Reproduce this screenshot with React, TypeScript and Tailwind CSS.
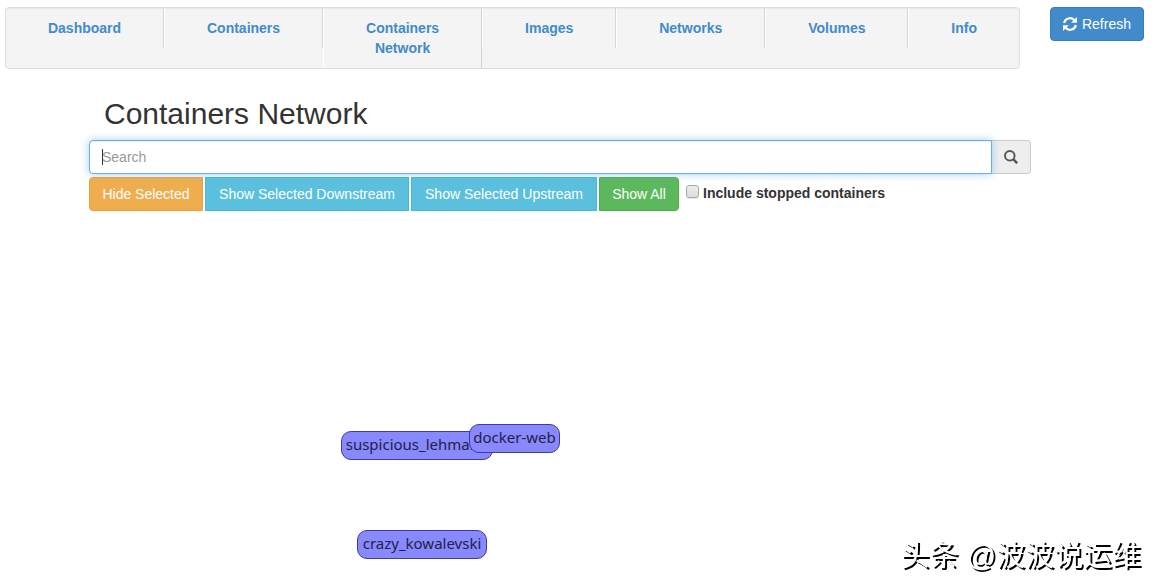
import React from 'react';

const navItems = [
  { label: 'Dashboard' },
  { label: 'Containers' },
  { label: 'Containers Network', active: true },
  { label: 'Images' },
  { label: 'Networks' },
  { label: 'Volumes' },
  { label: 'Info' },
];

const nodes = [
  { name: 'suspicious_lehmann', x: 252, y: 220, width: 152 },
  { name: 'docker-web', x: 380, y: 213, width: 91 },
  { name: 'crazy_kowalevski', x: 268, y: 319, width: 130 },
];

const RefreshIcon: React.FC = () => (
  <svg className="w-[14px] h-[14px]" viewBox="0 0 14 14" fill="none" aria-hidden="true">
    <path d="M1.2 6A5.8 5.4 0 0 1 11.4 3.2" stroke="currentColor" strokeWidth="2.2" />
    <path d="M14 0V5.8H8.2Z" fill="currentColor" />
    <path d="M12.8 8A5.8 5.4 0 0 1 2.6 10.8" stroke="currentColor" strokeWidth="2.2" />
    <path d="M0 14V8.2H5.8Z" fill="currentColor" />
  </svg>
);

const SearchIcon: React.FC = () => (
  <svg className="w-[14px] h-[14px]" viewBox="0 0 14 14" fill="none" stroke="currentColor" aria-hidden="true">
    <circle cx="5.8" cy="5.8" r="4.8" strokeWidth="1.9" />
    <path d="M9.2 9.2L13.2 13.2" strokeWidth="2.5" />
  </svg>
);

const NavBar: React.FC = () => (
  <nav className="flex-1 bg-[#f4f4f4] border border-[#dfdfdf] rounded shadow-[inset_0_1px_1px_rgba(0,0,0,0.05)]">
    <ul className="flex">
      {navItems.map((item, i) => (
        <li key={item.label} className="flex-auto">
          <a
            href="#"
            className={`block py-[10px] text-center font-bold text-[#428bca] ${i > 0 ? 'border-l border-l-white' : ''} ${
              i < navItems.length - 1 ? 'border-r border-r-[#d5d5d5]' : ''
            }`}
          >
            {item.active ? (
              <>
                Containers
                <br />
                Network
              </>
            ) : (
              item.label
            )}
          </a>
        </li>
      ))}
    </ul>
  </nav>
);

const Toolbar: React.FC = () => (
  <div className="flex items-start mt-[3px] gap-[2px] text-white">
    <button className="w-[114px] h-[34px] rounded-l bg-[#f0ad4e] border border-[#eea236]">Hide Selected</button>
    <button className="w-[204px] h-[34px] bg-[#5bc0de] border border-[#46b8da]">Show Selected Downstream</button>
    <button className="w-[186px] h-[34px] bg-[#5bc0de] border border-[#46b8da]">Show Selected Upstream</button>
    <button className="w-[80px] h-[34px] rounded-r bg-[#5cb85c] border border-[#4cae4c]">Show All</button>
    <label className="flex items-start pl-[5px] pt-[6px] gap-1 font-bold text-[#333]">
      <input
        type="checkbox"
        className="appearance-none w-[13px] h-[13px] mt-[2px] rounded-[3px] border border-[#a8a8a8] bg-linear-to-b from-[#eeeeee] to-[#dcdcdc] shadow-[0_1px_1px_rgba(0,0,0,0.1)]"
      />
      Include stopped containers
    </label>
  </div>
);

const NetworkGraph: React.FC = () => (
  <div className="relative h-[360px] font-['Noto_Sans',sans-serif] text-[15px] text-[#222244]">
    {nodes.map((node) => (
      <div
        key={node.name}
        className="absolute flex justify-center h-[29px] leading-[25px] whitespace-nowrap rounded-[10px] bg-[#8888ff] border border-[#3c3ca0]"
        style={{ left: node.x, top: node.y, width: node.width }}
      >
        {node.name}
      </div>
    ))}
  </div>
);

const App: React.FC = () => {
  return (
    <div className="bg-white font-['Liberation_Sans',Arial,sans-serif] text-[14px] leading-5 text-[#333]">
      <header className="flex items-start gap-[30px] pt-[7px] pl-[5px] pr-[15px]">
        <NavBar />
        <button className="flex items-center gap-[5px] h-[34px] px-3 rounded bg-[#428bca] border border-[#357ebd] text-white">
          <RefreshIcon />
          Refresh
        </button>
      </header>

      <main className="pl-[89px] pr-[128px] pt-7">
        <h1 className="pl-[15px] mb-[10px] text-[30px] leading-[33px]">Containers Network</h1>

        <div className="relative flex">
          <input
            type="text"
            aria-label="Search"
            placeholder="Search"
            className="flex-1 h-[34px] px-3 z-10 rounded-l bg-white border border-[#66afe9] outline-none placeholder:text-[#999] shadow-[inset_0_1px_1px_rgba(0,0,0,0.075),0_0_8px_rgba(102,175,233,0.6)]"
          />
          <span className="absolute z-20 left-[13px] top-[9px] w-px h-4 bg-[#333]" />
          <button
            aria-label="Search containers"
            className="flex items-center justify-center w-[39px] h-[34px] rounded-r bg-[#eeeeee] border border-l-0 border-[#cccccc] text-[#555]"
          >
            <SearchIcon />
          </button>
        </div>

        <Toolbar />
        <NetworkGraph />
      </main>

      <div className="fixed right-[18px] bottom-[12px] font-['Liberation_Sans','Noto_Sans_CJK_SC',sans-serif] text-[29px] leading-10 text-white [text-shadow:2px_2px_0_#000]">
        头条 @波波说运维
      </div>
    </div>
  );
};

export default App;
